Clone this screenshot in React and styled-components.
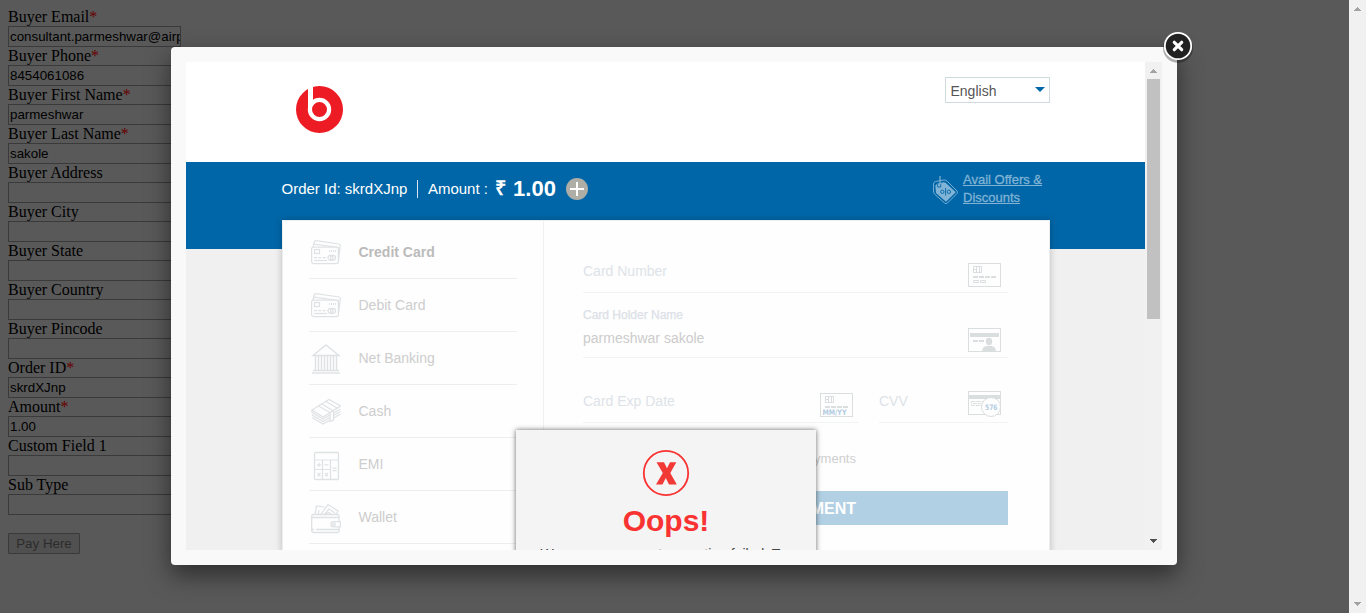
import React from "react";
import styled, { createGlobalStyle } from "styled-components";

const GlobalStyle = createGlobalStyle`
  * { box-sizing: border-box; }
  body { margin: 0; overflow: hidden; }
  svg { display: block; }
`;

const sans = `"Liberation Sans", Arial, sans-serif`;

const Page = styled.div`
  position: relative;
  display: flex;
  width: 1366px;
  height: 613px;
  overflow: hidden;
  background: #595959;
`;

const BuyerForm = styled.form`
  flex: 1;
  padding: 8px;
  font: 16px/18px "Liberation Serif", "Times New Roman", serif;
  color: #000;
`;

const Field = styled.label`
  display: block;
  height: 39px;
`;

const Required = styled.span`
  color: #660000;
`;

const TextBox = styled.div`
  width: 173px;
  height: 21px;
  padding: 0 1px;
  border: 1px solid #3a3a3a;
  overflow: hidden;
  white-space: nowrap;
  font: 13.33px/19px ${sans};
`;

const PayButton = styled.button`
  display: block;
  margin-top: 18px;
  width: 72px;
  height: 21px;
  padding: 0;
  border: 1px solid #3a3a3a;
  border-radius: 1px;
  background: #505050;
  color: #2c2c2c;
  font: 13.33px/18px ${sans};
`;

const Track = styled.div`
  display: flex;
  flex-direction: column;
  justify-content: space-between;
  align-items: center;
  flex: none;
  width: 17px;
  height: 100%;
  background: #f1f1f1;
`;

const Arrow = styled.svg`
  flex: none;
  width: 17px;
  height: 17px;
  fill: ${(p) => p.$color};
  transform: ${(p) => (p.$down ? "rotate(180deg)" : "none")};
`;

const Thumb = styled.div`
  width: 13px;
  height: 240px;
  background: #c1c1c1;
`;

const ThumbArea = styled.div`
  flex: 1;
`;

const Dialog = styled.div`
  position: absolute;
  left: 171px;
  top: 47px;
  width: 1006px;
  height: 518px;
  padding: 15px;
  border-radius: 4px;
  background: #f9f9f9;
  box-shadow: 0 10px 25px rgba(0, 0, 0, 0.5);
`;

const CloseButton = styled.svg`
  position: absolute;
  top: -18px;
  right: -19px;
  width: 36px;
  height: 36px;
`;

const Frame = styled.div`
  position: relative;
  display: flex;
  width: 976px;
  height: 488px;
  overflow: hidden;
  background: #f0f0f0;
  font-family: ${sans};
`;

const Checkout = styled.div`
  flex: 1;
  height: 488px;
  overflow: hidden;
`;

const Header = styled.header`
  display: flex;
  justify-content: space-between;
  align-items: flex-start;
  height: 100px;
  padding: 15px 95px 0 109px;
  background: #fff;
`;

const Logo = styled.svg`
  width: 49px;
  height: 49px;
  margin-top: 8px;
`;

const Language = styled.div`
  display: flex;
  justify-content: space-between;
  width: 105px;
  height: 26px;
  padding: 0 4px 0 4.5px;
  border: 1px solid #cfdcdf;
  color: #555;
  font-size: 14px;
  line-height: 27px;
`;

const Caret = styled.svg`
  width: 10px;
  height: 5px;
  margin-top: 9px;
`;

const Banner = styled.section`
  display: flex;
  align-items: flex-start;
  height: 87px;
  padding: 9px 95px 0 95.5px;
  background: #0066a7;
  color: #fff;
`;

const OrderId = styled.div`
  margin-top: 9px;
  height: 18px;
  padding-right: 9.5px;
  border-right: 1px solid #d5e4ef;
  font-size: 15px;
  line-height: 18px;
`;

const AmountLabel = styled.div`
  margin: 9px 0 0 10px;
  font-size: 15px;
  line-height: 18px;
`;

const Amount = styled.div`
  display: flex;
  justify-content: space-between;
  margin: 4px 0 0 7.5px;
  width: 60.5px;
  font-size: 22px;
  font-weight: 700;
  line-height: 27px;
`;

const Rupee = styled.span`
  font-size: 20px;
  font-weight: 700;
`;

const Plus = styled.svg`
  width: 22px;
  height: 22px;
  margin: 7px 0 0 10px;
`;

const Offers = styled.div`
  display: flex;
  gap: 5px;
  margin-left: auto;
  width: 117px;
  color: #80b3d5;
`;

const OfferText = styled.div`
  width: 86px;
  font-size: 13px;
  line-height: 18px;
  text-decoration: underline;
  -webkit-text-stroke: 0.3px #80b3d5;
  white-space: nowrap;
`;

const TagIcon = styled.svg`
  width: 25px;
  height: 29px;
  margin-top: 5px;
`;

const Card = styled.main`
  display: flex;
  width: 768px;
  height: 400px;
  margin: -29px 0 0 96px;
  border: 1px solid #ebedee;
  background: #fefefe;
  box-shadow: 0 0 7px rgba(0, 0, 0, 0.22);
  position: relative;
`;

const Methods = styled.nav`
  width: 261px;
  padding: 5px 26px 0 26px;
  border-right: 1px solid #eff1f2;
`;

const Method = styled.div`
  display: flex;
  align-items: center;
  height: 53px;
  padding-left: 2px;
  gap: 17.5px;
  border-bottom: 1px solid #eceeef;
  color: ${(p) => (p.$active ? "#bbb" : "#cdcdcd")};
  font-size: 14px;
  font-weight: ${(p) => (p.$active ? 700 : 400)};
`;

const MethodIcon = styled.svg`
  width: 30px;
  height: 32px;
  margin-top: 2px;
  fill: none;
  stroke: #dfe2e4;
  stroke-width: 1.25;
`;

const Details = styled.div`
  width: 425px;
  margin-left: 39px;
`;

const Row = styled.div`
  display: flex;
  gap: 20px;
`;

const Entry = styled.div`
  display: flex;
  flex: ${(p) => (p.$width ? "none" : "1")};
  width: ${(p) => p.$width || "auto"};
  justify-content: space-between;
  align-items: flex-end;
  height: ${(p) => p.$height || 65}px;
  padding: 0 ${(p) => (p.$width ? 6 : 7)}px 5px 0;
  border-bottom: 1px solid #f2f3f4;
`;

const EntryText = styled.div`
  height: 25px;
  color: #dde3e8;
  font-size: 14px;
  line-height: 18px;
`;

const EntryFilled = styled.div`
  height: 45px;
  color: #ccc;
  font-size: 14px;
  line-height: 24px;
`;

const Caption = styled.div`
  color: #dbe1e7;
  font-size: 12px;
  line-height: 16px;
  height: 19px;
  -webkit-text-stroke: 0.25px #dbe1e7;
`;

const FieldIcon = styled.svg`
  width: 33px;
  height: ${(p) => p.$height || 24}px;
  fill: none;
  stroke: #dadedf;
`;

const IconText = styled.text`
  fill: #b2cce2;
  stroke: none;
  font: 700 7.5px "DejaVu Sans", sans-serif;
`;

const SaveNote = styled.div`
  width: 273px;
  height: 68px;
  padding-top: 26px;
  color: #cfcfcf;
  font-size: 13px;
  line-height: 20px;
  text-align: right;
`;

const MakePayment = styled.div`
  height: 34px;
  padding-right: 6px;
  background: #b2d0e4;
  color: #fff;
  font-size: 16px;
  font-weight: 700;
  line-height: 35px;
  text-align: center;
`;

const ErrorPopup = styled.div`
  position: absolute;
  left: 330px;
  top: 368px;
  display: flex;
  flex-direction: column;
  align-items: center;
  width: 300px;
  height: 200px;
  padding-top: 19px;
  background: #f4f4f4;
  box-shadow: 0 0 5px rgba(0, 0, 0, 0.6);
`;

const ErrorIcon = styled.svg`
  width: 48px;
  height: 48px;
`;

const ErrorTitle = styled.div`
  margin: 6px 0 0 0;
  color: #f93232;
  font-size: 30px;
  font-weight: 700;
  line-height: 36px;
`;

const ErrorText = styled.div`
  margin-top: 5px;
  width: 260px;
  color: #444;
  font-size: 14px;
  line-height: 20px;
  text-align: center;
`;

const fields = [
  ["Buyer Email", true, "consultant.parmeshwar@airpay.co.in"],
  ["Buyer Phone", true, "8454061086"],
  ["Buyer First Name", true, "parmeshwar"],
  ["Buyer Last Name", true, "sakole"],
  ["Buyer Address"],
  ["Buyer City"],
  ["Buyer State"],
  ["Buyer Country"],
  ["Buyer Pincode"],
  ["Order ID", true, "skrdXJnp"],
  ["Amount", true, "1.00"],
  ["Custom Field 1"],
  ["Sub Type"],
];

const cards = (
  <>
    <path d="M2 10 L3.5 4.5 Q4 3.500 5 3.700 L28 7 Q29.500 7.300 29.300 9 L27.500 23" />
    <path d="M3 7.200 L28 10.500" />
    <rect x="0.600" y="10" width="26.800" height="16.500" rx="2" fill="#fefefe" />
    <rect x="3.500" y="12.500" width="5" height="4" />
    <path d="M18 14h7" strokeDasharray="1 1" strokeWidth="2" />
    <path d="M3 20.500h13" strokeDasharray="3 1.300" />
    <path d="M3 23.500h13" />
    <circle cx="19.500" cy="20.800" r="2.500" />
    <circle cx="22" cy="20.800" r="2.500" />
  </>
);

const methods = [
  ["Credit Card", cards],
  ["Debit Card", cards],
  [
    "Net Banking",
    <>
      <path d="M2 12.500 L15 2 L28 12.500 Z" strokeWidth="1.400" />
      <path d="M4.500 13v15M7.500 13v15M10.500 13v15M13.500 13v15M16.500 13v15M19.500 13v15M22.500 13v15M25.500 13v15" strokeWidth="1.400" />
      <path d="M2 27.500h26M1 30h28" strokeWidth="1.700" />
    </>,
  ],
  [
    "Cash",
    <>
      <path d="M1 14 L18 3.500 L29.500 10 L12 21 Z" strokeWidth="1.300" />
      <path d="M11 8 L22.500 15v9l-3.500 1.500v-9L7.500 10 M15 5.500 L26 12" />
      <path d="M1 16.500l11 6.500 7-4M1 19l11 6.500 7-4M1 21.500l11 6.500 7-4M1 14v3M22.500 17l7-4M22.500 19.500l7-4M22.500 22l7-4" />
    </>,
  ],
  [
    "EMI",
    <>
      <rect x="3.500" y="3.500" width="24" height="27" rx="1" strokeWidth="1.300" />
      <path d="M3.500 11h24M11.500 11V30.500M19.500 11V30.500M3.500 20.500h16" strokeWidth="1.200" />
      <path d="M6 15.800h4M8 13.800v4M13.500 15.800h4M21.500 19h4M21.500 21.500h4M6.500 23.800l3 3.500M9.500 23.800l-3 3.500M14 23.800l3 3.500M17 23.800l-3 3.500" />
    </>,
  ],
  [
    "Wallet",
    <>
      <path d="M4 13L5.500 4l8 1M9.500 13L17 2.500l10 6.500-2.500 4M13 13l5-6 6 4M7 13l1-5M14 13q4-5 7 0" />
      <path d="M28 19v-5q0-1.500-2-1.500H2.500Q.7 12.500.7 14.500v14q0 2 2 2h23.500q2 0 2-2V25M.7 15.500h27M5 27.500h23M1 27.500h2" strokeWidth="1.300" />
      <path d="M29.400 19.500h-7q-2.500 0-2.500 2.700t2.500 2.700h7z" />
      <circle cx="23" cy="22.200" r="1.300" />
    </>,
  ],
];

const ChipLines = () => (
  <>
    <rect x="0.500" y="0.500" width="32" height="23" />
    <path d="M5.500 3.500h8v6h-8zM8.500 3.500v6M11.500 3.500v6M5.500 6.500h3" />
    <path d="M5 14h23" strokeWidth="2" strokeDasharray="5 1" />
  </>
);

function ScrollArrow({ down, color }) {
  return (
    <Arrow $down={down} $color={color} viewBox="0 0 17 17" shapeRendering="crispEdges">
      <path d="M5 11h7v-1h-1V9h-1V8H9V7H8v1H7v1H6v1H5z" />
    </Arrow>
  );
}

export default function App() {
  return (
    <Page>
      <GlobalStyle />
      <BuyerForm>
        {fields.map(([label, required, value]) => (
          <Field key={label}>
            {label}
            {required && <Required>*</Required>}
            <TextBox>{value}</TextBox>
          </Field>
        ))}
        <PayButton type="button">Pay Here</PayButton>
      </BuyerForm>
      <Track>
        <ScrollArrow color="#a3a3a3" />
        <ScrollArrow down color="#a3a3a3" />
      </Track>

      <Dialog>
        <Frame>
          <Checkout>
            <Header>
              <Logo viewBox="0 0 49 49">
                <circle cx="24.500" cy="24.500" r="23.500" fill="#ed1c24" />
                <path d="M15.500 0v24.500" stroke="#fff" strokeWidth="5" />
                <circle cx="24.500" cy="24.500" r="9.600" fill="#ed1c24" stroke="#fff" strokeWidth="4.200" />
              </Logo>
              <Language>
                English
                <Caret viewBox="0 0 10 5">
                  <path d="M0 0h10L5 5z" fill="#0066a7" />
                </Caret>
              </Language>
            </Header>
            <Banner>
              <OrderId>Order Id: skrdXJnp</OrderId>
              <AmountLabel>Amount :</AmountLabel>
              <Amount>
                <Rupee>₹</Rupee>
                <span>1.00</span>
              </Amount>
              <Plus viewBox="0 0 22 22">
                <circle cx="11" cy="11" r="11" fill="#aeaea6" />
                <path d="M4 11h14M11 4v14" stroke="#fff" strokeWidth="2" />
              </Plus>
              <Offers>
                <TagIcon viewBox="0 0 25 29" fill="none" stroke="#80b3d5">
                  <path d="M2.500 5.500L11 4q2 0 3.200 1.200L24 15q1 1.200 0 2.500L14.500 27q-1.500 1.300-3 0L1.500 18Q.5 17 .5 15V8q0-2 2-2.500z" strokeWidth="0.900" />
                  <path d="M4.500 7.500l6.300-1.300q1.200 0 2 .8L22.800 16.300 13 25.800 3 17 2.300 9.500z" fill="#80b3d5" stroke="none" />
                  <path d="M4.700 7.500v3.500h3V7.500" stroke="#0066a7" strokeWidth="0.900" />
                  <path d="M7 0v6.500q0 2.500-1.500 3.500" strokeWidth="1.200" />
                  <path d="M12.600 12v7.500" stroke="#0066a7" strokeWidth="0.900" />
                  <circle cx="9.300" cy="15.800" r="1.700" stroke="#0066a7" strokeWidth="0.900" />
                  <circle cx="15.900" cy="15.800" r="1.700" stroke="#0066a7" strokeWidth="0.900" />
                </TagIcon>
                <OfferText>
                  Avail Offers &amp;
                  <br />
                  Discounts
                </OfferText>
              </Offers>
            </Banner>
            <Card>
              <Methods>
                {methods.map(([name, art], i) => (
                  <Method key={name} $active={i === 0}>
                    <MethodIcon viewBox="0 0 30 32">{art}</MethodIcon>
                    {name}
                  </Method>
                ))}
              </Methods>
              <Details>
                <Entry $height={72}>
                  <EntryText>Card Number</EntryText>
                  <FieldIcon viewBox="0 0 33 24">
                    <ChipLines />
                    <path d="M5.500 17.500h5v2h-5zM12.500 17.500h5v2h-5z" />
                  </FieldIcon>
                </Entry>
                <Entry>
                  <EntryFilled>
                    <Caption>Card Holder Name</Caption>
                    parmeshwar sakole
                  </EntryFilled>
                  <FieldIcon viewBox="0 0 33 24">
                    <rect x="0.500" y="0.500" width="32" height="23" />
                    <path d="M2 7h29" strokeWidth="4" />
                    <path d="M5 13h11" strokeWidth="2" strokeDasharray="5 1" />
                    <path d="M14 24q0-6 5-6h4q5 0 5 6z" fill="#dadedf" stroke="none" />
                    <ellipse cx="21" cy="13.500" rx="3.200" ry="3.700" fill="#dadedf" stroke="none" />
                  </FieldIcon>
                </Entry>
                <Row>
                  <Entry $width="276px">
                    <EntryText>Card Exp Date</EntryText>
                    <FieldIcon viewBox="0 0 33 24">
                      <ChipLines />
                      <IconText x="2.500" y="21.500" textLength="24" lengthAdjust="spacingAndGlyphs">
                        MM/YY
                      </IconText>
                    </FieldIcon>
                  </Entry>
                  <Entry>
                    <EntryText>CVV</EntryText>
                    <FieldIcon $height={26} viewBox="0 0 33 26">
                      <rect x="0.500" y="0.500" width="32" height="23" />
                      <path d="M1 6h31" strokeWidth="4" />
                      <path d="M3.500 10.500h12v4h-12zM5 12.500h8" strokeDasharray="4 1" />
                      <circle cx="23" cy="16" r="9.500" fill="#fefefe" />
                      <IconText x="17" y="18.500" textLength="12.500" lengthAdjust="spacingAndGlyphs">
                        576
                      </IconText>
                    </FieldIcon>
                  </Entry>
                </Row>
                <SaveNote>payments</SaveNote>
                <MakePayment>MAKE PAYMENT</MakePayment>
              </Details>
            </Card>
          </Checkout>
          <Track>
            <ScrollArrow color="#a3a3a3" />
            <ThumbArea>
              <Thumb />
            </ThumbArea>
            <ScrollArrow down color="#505050" />
          </Track>
          <ErrorPopup>
            <ErrorIcon viewBox="0 0 48 48">
              <circle cx="24" cy="24" r="22.200" fill="none" stroke="#f93232" strokeWidth="1.800" />
              <path d="M14.500 13.200h7.500l3 6 3-6h6.300l-6 10.800 6.500 11.500H27l-3.200-6.500-3.300 6.500h-6.500l6.800-11.500z" fill="#f13a35" />
            </ErrorIcon>
            <ErrorTitle>Oops!</ErrorTitle>
            <ErrorText>We are sorry, your transaction failed. Try again</ErrorText>
          </ErrorPopup>
        </Frame>
        <CloseButton viewBox="0 0 36 36">
          <circle cx="18" cy="19" r="15" fill="#000" opacity="0.300" />
          <circle cx="18" cy="17" r="13.200" fill="#222" stroke="#fff" strokeWidth="1.800" />
          <path d="M14.300 13.300l7.400 7.400M21.700 13.300l-7.400 7.400" stroke="#fff" strokeWidth="3.200" strokeLinecap="round" />
        </CloseButton>
      </Dialog>
    </Page>
  );
}
